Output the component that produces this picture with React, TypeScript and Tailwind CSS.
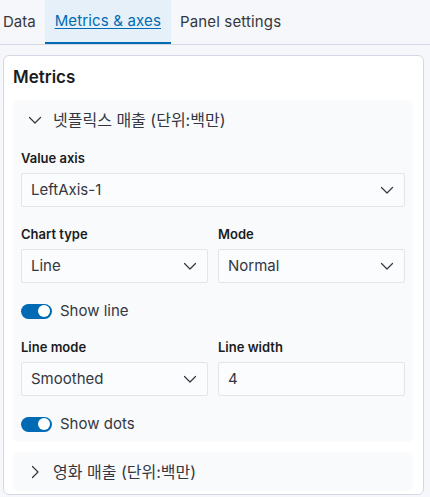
import { ReactNode } from 'react';

function Chevron({ dir = 'down' }: { dir?: 'down' | 'right' }) {
  return (
    <svg
      className="w-4 h-4"
      viewBox="0 0 16 16"
      fill="none"
      stroke="currentColor"
      strokeWidth={1.2}
      strokeLinecap="round"
      strokeLinejoin="round"
    >
      {dir === 'down' ? <path d="M2.5 5.5l5.5 5.5 5.5-5.5" /> : <path d="M5.5 2.5l5.5 5.5-5.5 5.5" />}
    </svg>
  );
}

function Label({ children }: { children: ReactNode }) {
  return <div className="text-[13px] font-semibold text-[#1a1c21] mb-[6px] leading-[18px]">{children}</div>;
}

function Select({ value }: { value: string }) {
  return (
    <div className="h-[34px] flex items-center justify-between pl-[9px] pr-[9px] bg-[#fbfcfd] border border-[#e2e5ec] rounded-[2px] text-[15px] text-[#343741]">
      <span>{value}</span>
      <span className="text-[#343741]">
        <Chevron />
      </span>
    </div>
  );
}

function Input({ value }: { value: string }) {
  return (
    <div className="h-[34px] flex items-center pl-[9px] bg-[#fbfcfd] border border-[#e2e5ec] rounded-[2px] text-[15px] text-[#343741]">
      {value}
    </div>
  );
}

function Toggle({ label }: { label: string }) {
  return (
    <div className="flex items-center gap-[8px] h-[20px]">
      <div className="relative w-[31px] h-[15px] rounded-full bg-[#006bb4]">
        <div className="absolute right-[2px] top-[1.5px] w-[12px] h-[12px] rounded-full bg-white" />
      </div>
      <span className="text-[15px] text-[#343741]">{label}</span>
    </div>
  );
}

export default function App() {
  return (
    <div className="w-[430px] h-[497px] bg-[#f5f7fa] overflow-hidden" style={{ fontFamily: 'Inter, "Noto Sans CJK KR", sans-serif' }}>
      {/* Tabs */}
      <div className="flex h-[45px] border-b border-[#d3dae6] text-[15px] text-[#343741]">
        <div className="px-[3px] flex items-center">Data</div>
        <div className="ml-[6px] px-[10px] flex items-center bg-[#e6f0f8] border-b-2 border-[#006bb4] text-[#006bb4] underline underline-offset-2 tracking-[0.15px]">
          Metrics &amp; axes
        </div>
        <div className="px-[9px] flex items-center tracking-[0.15px]">Panel settings</div>
      </div>

      {/* Panel */}
      <div className="ml-[3px] mt-[10px] w-[421px] h-[440px] bg-white border border-[#d3dae6] rounded-[6px] px-[9px] pt-[10px] overflow-hidden">
        <div className="text-[17px] font-semibold text-[#1a1c21] leading-[22px]">Metrics</div>

        <div className="mt-[12px] bg-[#f9fafc] rounded-[6px] pl-[8px] pr-[8px] pb-[8px] w-[400px]">
          <div className="h-[40px] flex items-center gap-[10px] pl-[6px] text-[16px] text-[#343741]">
            <Chevron />
            <span>넷플릭스 매출 (단위:백만)</span>
          </div>

          <div className="mt-[9px]">
            <Label>Value axis</Label>
            <Select value="LeftAxis-1" />
          </div>

          <div className="mt-[18px] grid grid-cols-2 gap-[10px]">
            <div>
              <Label>Chart type</Label>
              <Select value="Line" />
            </div>
            <div>
              <Label>Mode</Label>
              <Select value="Normal" />
            </div>
          </div>

          <div className="mt-[18px]">
            <Toggle label="Show line" />
          </div>

          <div className="mt-[17px] grid grid-cols-2 gap-[10px]">
            <div>
              <Label>Line mode</Label>
              <Select value="Smoothed" />
            </div>
            <div>
              <Label>Line width</Label>
              <Input value="4" />
            </div>
          </div>

          <div className="mt-[18px]">
            <Toggle label="Show dots" />
          </div>
        </div>

        <div className="mt-[10px] bg-[#f9fafc] rounded-[6px] w-[400px] h-[39px] flex items-center gap-[10px] pl-[14px] text-[16px] text-[#343741]">
          <Chevron dir="right" />
          <span>영화 매출 (단위:백만)</span>
        </div>
      </div>
    </div>
  );
}
